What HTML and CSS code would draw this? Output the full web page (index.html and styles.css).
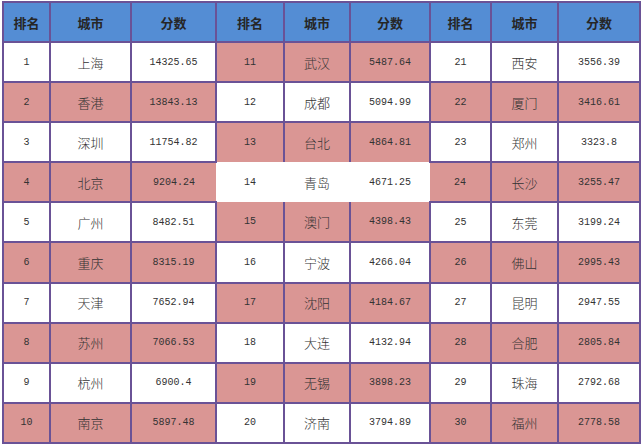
FILE: index.html
```html
<!DOCTYPE html>
<html lang="zh">
<head>
<meta charset="utf-8">
<title>城市排名</title>
<link rel="stylesheet" href="styles.css">
</head>
<body>
<table class="rank">
  <colgroup>
    <col class="c-n1"><col class="c-c1"><col class="c-s1">
    <col class="c-n2"><col class="c-c2"><col class="c-s2">
    <col class="c-n3"><col class="c-c3"><col class="c-s3">
  </colgroup>
  <thead>
    <tr class="head">
      <th>排名</th><th>城市</th><th>分数</th>
      <th>排名</th><th>城市</th><th>分数</th>
      <th>排名</th><th>城市</th><th>分数</th>
    </tr>
  </thead>
  <tbody>
    <tr>
      <td class="num">1</td><td class="city">上海</td><td class="num">14325.65</td>
      <td class="num pink">11</td><td class="city pink">武汉</td><td class="num pink">5487.64</td>
      <td class="num">21</td><td class="city">西安</td><td class="num">3556.39</td>
    </tr>
    <tr>
      <td class="num pink">2</td><td class="city pink">香港</td><td class="num pink">13843.13</td>
      <td class="num">12</td><td class="city">成都</td><td class="num">5094.99</td>
      <td class="num pink">22</td><td class="city pink">厦门</td><td class="num pink">3416.61</td>
    </tr>
    <tr>
      <td class="num">3</td><td class="city">深圳</td><td class="num">11754.82</td>
      <td class="num pink">13</td><td class="city pink">台北</td><td class="num pink">4864.81</td>
      <td class="num">23</td><td class="city">郑州</td><td class="num">3323.8</td>
    </tr>
    <tr>
      <td class="num pink">4</td><td class="city pink">北京</td><td class="num pink">9204.24</td>
      <td class="num bare">14</td><td class="city bare">青岛</td><td class="num bare">4671.25</td>
      <td class="num pink">24</td><td class="city pink">长沙</td><td class="num pink">3255.47</td>
    </tr>
    <tr>
      <td class="num">5</td><td class="city">广州</td><td class="num">8482.51</td>
      <td class="num pink">15</td><td class="city pink">澳门</td><td class="num pink">4398.43</td>
      <td class="num">25</td><td class="city">东莞</td><td class="num">3199.24</td>
    </tr>
    <tr>
      <td class="num pink">6</td><td class="city pink">重庆</td><td class="num pink">8315.19</td>
      <td class="num">16</td><td class="city">宁波</td><td class="num">4266.04</td>
      <td class="num pink">26</td><td class="city pink">佛山</td><td class="num pink">2995.43</td>
    </tr>
    <tr>
      <td class="num">7</td><td class="city">天津</td><td class="num">7652.94</td>
      <td class="num pink">17</td><td class="city pink">沈阳</td><td class="num pink">4184.67</td>
      <td class="num">27</td><td class="city">昆明</td><td class="num">2947.55</td>
    </tr>
    <tr>
      <td class="num pink">8</td><td class="city pink">苏州</td><td class="num pink">7066.53</td>
      <td class="num">18</td><td class="city">大连</td><td class="num">4132.94</td>
      <td class="num pink">28</td><td class="city pink">合肥</td><td class="num pink">2805.84</td>
    </tr>
    <tr>
      <td class="num">9</td><td class="city">杭州</td><td class="num">6900.4</td>
      <td class="num pink">19</td><td class="city pink">无锡</td><td class="num pink">3898.23</td>
      <td class="num">29</td><td class="city">珠海</td><td class="num">2792.68</td>
    </tr>
    <tr>
      <td class="num pink">10</td><td class="city pink">南京</td><td class="num pink">5897.48</td>
      <td class="num">20</td><td class="city">济南</td><td class="num">3794.89</td>
      <td class="num pink">30</td><td class="city pink">福州</td><td class="num pink">2778.58</td>
    </tr>
  </tbody>
</table>
</body>
</html>
```

FILE: styles.css
```css
html, body {
  margin: 0;
  padding: 0;
  background: #ffffff;
}

body {
  padding: 1px 0 0 2px;
  font-family: "Noto Sans CJK SC", "Noto Sans", sans-serif;
}

.rank {
  border-collapse: collapse;
  table-layout: fixed;
  width: 637px;
  height: 443px;
}

.c-n1 { width: 47px; }
.c-c1 { width: 81px; }
.c-s1 { width: 85px; }
.c-n2 { width: 68px; }
.c-c2 { width: 66px; }
.c-s2 { width: 80px; }
.c-n3 { width: 61px; }
.c-c3 { width: 67px; }
.c-s3 { width: 82px; }

.rank th,
.rank td {
  border: 2px solid #6a5296;
  padding: 0;
  text-align: center;
  vertical-align: middle;
  background: #ffffff;
  color: #333333;
}

.head {
  height: 40px;
}

.rank th {
  background: #548dd4;
  color: #262626;
  font-weight: bold;
  font-size: 13px;
}

.city {
  font-size: 13px;
  font-weight: 300;
}

.num {
  font-family: "Liberation Mono", "DejaVu Sans Mono", monospace;
  font-size: 10px;
  color: #444444;
}

.rank td.pink {
  background: #da9694;
}

.rank td.bare {
  border-style: hidden;
  background: #ffffff;
}
```
